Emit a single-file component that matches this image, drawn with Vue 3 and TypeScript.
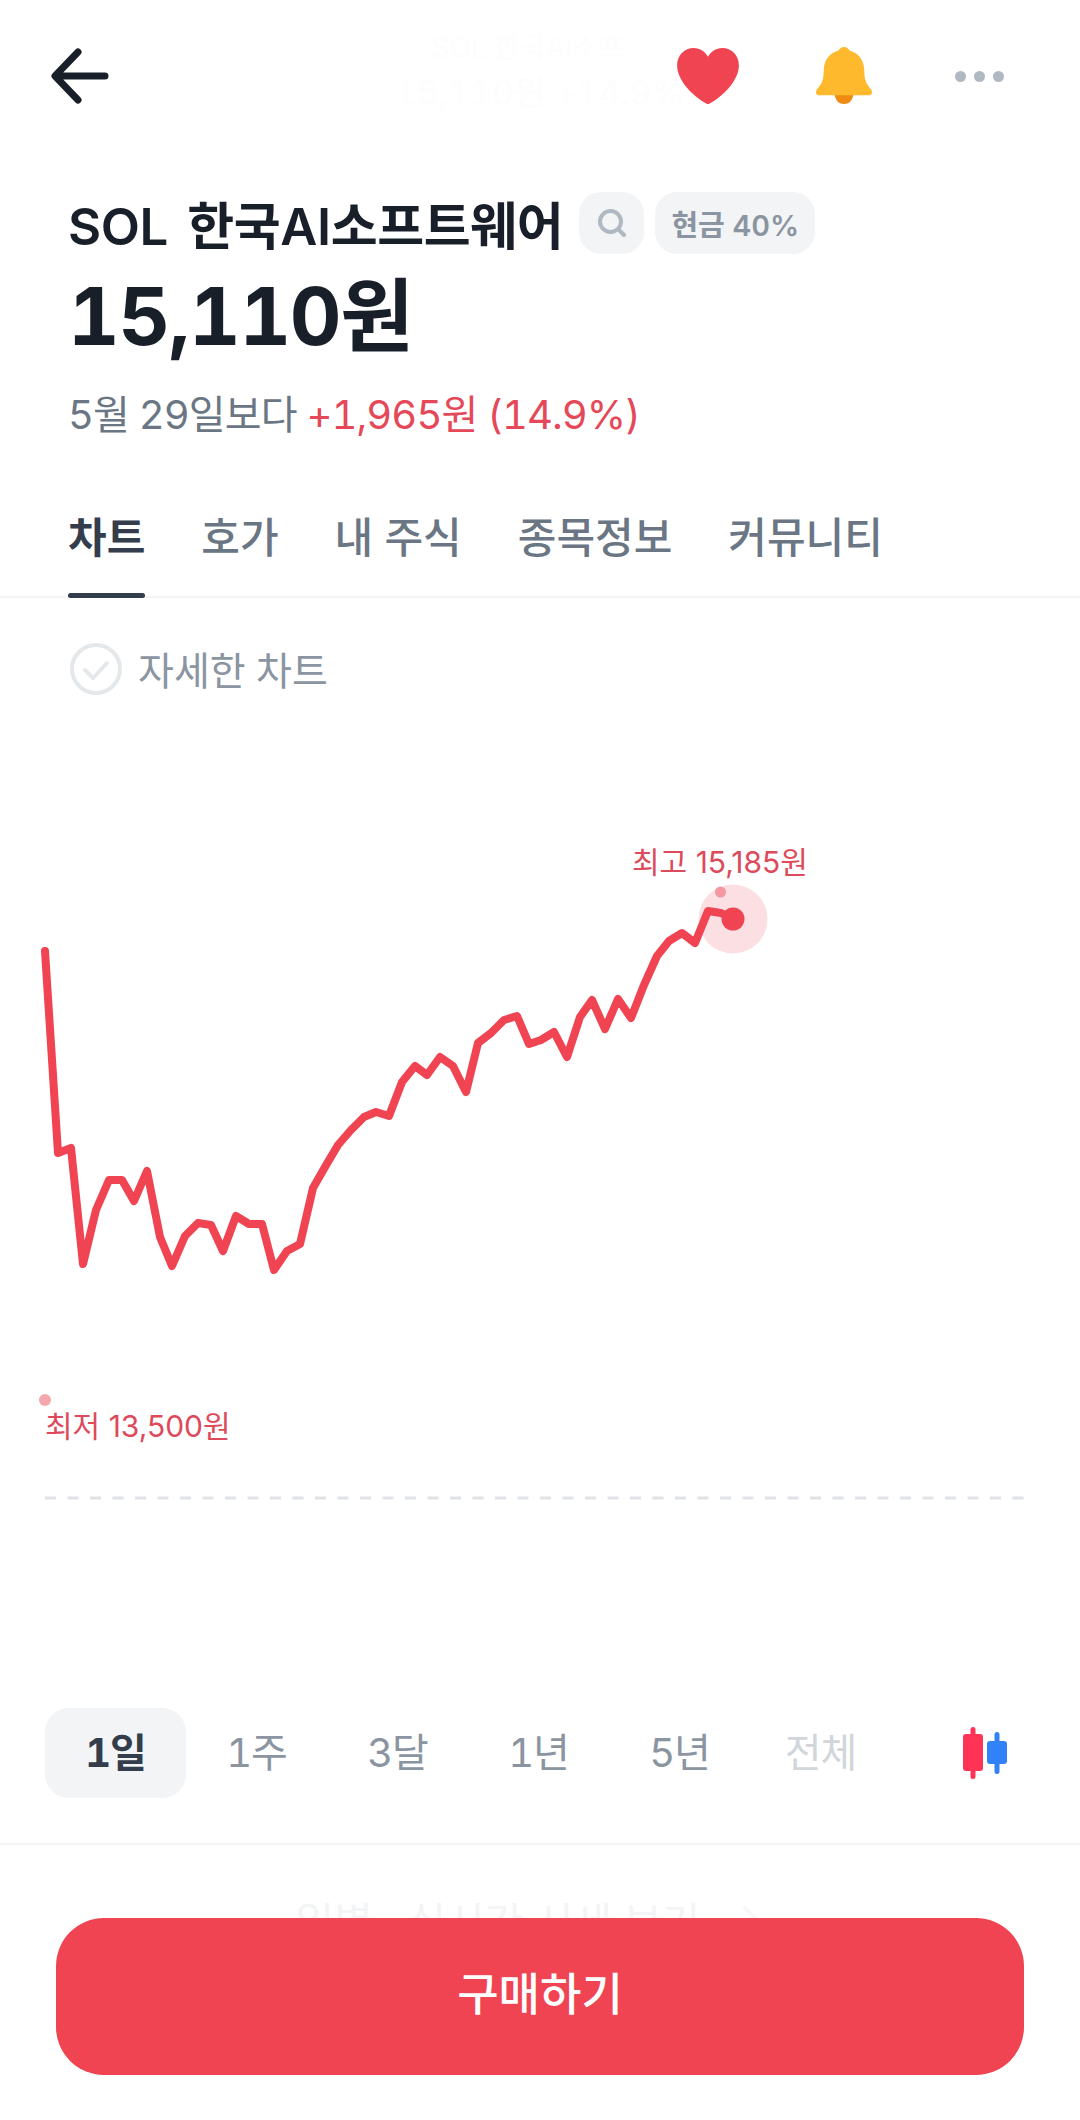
<script setup lang="ts">
const tabs = ['차트', '호가', '내 주식', '종목정보', '커뮤니티']
const periods = ['1일', '1주', '3달', '1년', '5년', '전체']

const line = [
  [45, 951], [58, 1153], [71, 1148], [83, 1264], [96, 1210], [109, 1180], [122, 1180], [134, 1201],
  [147, 1171], [160, 1237], [172, 1266], [185, 1236], [198, 1223], [211, 1225], [223, 1251], [236, 1216],
  [249, 1224], [262, 1224], [274, 1270], [287, 1251], [300, 1244], [313, 1188], [325, 1167], [338, 1145],
  [351, 1130], [364, 1117], [376, 1112], [389, 1116], [402, 1082], [415, 1066], [427, 1075], [440, 1057],
  [453, 1066], [466, 1092], [478, 1043], [491, 1033], [504, 1020], [517, 1016], [529, 1044], [541, 1040],
  [554, 1032], [567, 1057], [580, 1017], [592, 1000], [605, 1029], [618, 999], [631, 1018], [644, 985],
  [657, 956], [669, 941], [682, 933], [695, 943], [708, 911], [721, 913], [733, 919],
]
// svg starts at y=700 on the page
const points = line.map(([x, y]) => `${x},${y - 700}`).join(' ')
</script>

<template>
  <div class="page">
    <header class="top">
      <svg class="back" width="58" height="56" viewBox="0 0 58 56" fill="none" stroke="#191f28" stroke-width="7" stroke-linecap="round" stroke-linejoin="round">
        <path d="M27 4 4 28l23 24M5 28h49" />
      </svg>
      <div class="ghost-title">
        <div class="g1">SOL 한국AI소프…</div>
        <div class="g2">15,110원 +14.9%</div>
      </div>
      <div class="actions">
        <svg class="heart" width="64" height="56" viewBox="0 0 66 58"><path fill="#f04452" d="M33 58C30 58 1 39 1 18 1 7 9 0 18 0c7 0 12 4 15 9 3-5 8-9 15-9 9 0 17 7 17 18 0 21-29 40-32 40Z" /></svg>
        <svg width="58" height="58" viewBox="0 0 60 60">
          <path fill="#ee8b12" d="M20 46h20c0 8-4 13-10 13S20 54 20 46Z" />
          <path fill="#ffb92c" d="M30 0c3 0 5 2 6 4 9 2 15 10 15 21 0 6 1 11 4 15l3 4c2 3 1 6-3 6H5c-4 0-5-3-3-6l3-4c3-4 4-9 4-15C9 14 15 6 24 4c1-2 3-4 6-4Z" />
        </svg>
        <div class="dots"><i></i><i></i><i></i></div>
      </div>
    </header>

    <section class="info">
      <div class="name-row">
        <h1>SOL 한국AI소프트웨어</h1>
        <span class="chip icon">
          <svg width="30" height="30" viewBox="0 0 30 30" fill="none" stroke="#b0b8c1" stroke-width="4" stroke-linecap="round"><circle cx="13.5" cy="13.5" r="10.5" /><path d="m21 21 6 6" /></svg>
        </span>
        <span class="chip">현금 40%</span>
      </div>
      <div class="price">15,110원</div>
      <div class="change">5월 29일보다 <span class="up">+1,965원 (14.9%)</span></div>
    </section>

    <nav class="tabs">
      <div v-for="(t, i) in tabs" :key="t" class="tab" :class="{ on: i === 0 }">{{ t }}</div>
    </nav>

    <div class="detail">
      <svg width="52" height="52" viewBox="0 0 52 52" fill="none" stroke="#e5e8eb" stroke-linecap="round" stroke-linejoin="round">
        <circle cx="26" cy="26" r="24" stroke-width="4" />
        <path d="m15 27 8 8 14-15" stroke-width="4" />
      </svg>
      <span>자세한 차트</span>
    </div>

    <div class="chart">
      <svg width="1080" height="820" viewBox="0 0 1080 820">
        <circle cx="733" cy="219" r="34.5" fill="#fcdfe2" />
        <polyline :points="points" fill="none" stroke="#f04452" stroke-width="8" stroke-linejoin="round" stroke-linecap="round" />
        <circle cx="733" cy="219" r="11.5" fill="#f04452" />
        <circle cx="720.5" cy="192" r="5.5" fill="#f597a0" />
        <circle cx="45" cy="700" r="6" fill="#f5a7ae" />
        <line x1="45" y1="798" x2="1025" y2="798" stroke="#dfe3e8" stroke-width="3" stroke-dasharray="11 11.5" />
      </svg>
      <div class="label high">최고 15,185원</div>
      <div class="label low">최저 13,500원</div>
    </div>

    <div class="periods">
      <div v-for="(p, i) in periods" :key="p" class="period" :class="{ on: i === 0, off: i === 5 }">{{ p }}</div>
      <svg class="candle" width="44" height="52" viewBox="0 0 44 52">
        <rect x="7.5" y="0" width="5" height="52" rx="2.5" fill="#ff3355" />
        <rect x="0" y="7" width="20" height="37" rx="3" fill="#ff3355" />
        <rect x="31.5" y="5" width="5" height="42" rx="2.5" fill="#3182f6" />
        <rect x="24" y="14" width="20" height="23" rx="3" fill="#3182f6" />
      </svg>
    </div>

    <div class="more">
      <span>일별 · 실시간 시세 보기</span>
      <svg width="22" height="36" viewBox="0 0 22 36" fill="none" stroke="#f7f8f9" stroke-width="4" stroke-linecap="round" stroke-linejoin="round"><path d="m3 3 15 15L3 33" /></svg>
    </div>

    <button class="buy">구매하기</button>
  </div>
</template>

<style scoped>
.page {
  position: relative;
  width: 1080px;
  height: 2120px;
  overflow: hidden;
  background: #fff;
  font-family: Inter, "Noto Sans CJK KR", sans-serif;
  font-variant-numeric: tabular-nums;
  color: #191f28;
}
.top {
  position: relative;
  display: flex;
  align-items: center;
  justify-content: space-between;
  height: 56px;
  padding: 48px 76px 0 51px;
}
.ghost-title {
  position: absolute;
  left: 0;
  right: 0;
  top: 28px;
  text-align: center;
  color: #fdfdfd;
}
.g1 { font-size: 28px; line-height: 40px; }
.g2 { font-size: 34px; line-height: 50px; }
.actions {
  position: relative;
  display: flex;
  align-items: center;
}
.heart { margin-right: 75px; }
.dots {
  display: flex;
  gap: 8px;
  margin-left: 82px;
}
.dots i {
  width: 11px;
  height: 11px;
  border-radius: 50%;
  background: #b0b8c1;
}
.info { padding: 88px 68px 0; }
.name-row {
  display: flex;
  align-items: center;
  gap: 11px;
  height: 62px;
}
h1 {
  margin: 0 5px 0 0;
  font-size: 51px;
  font-weight: 600;
  letter-spacing: -0.4px;
  word-spacing: 6px;
  white-space: nowrap;
}
.chip {
  display: flex;
  align-items: center;
  justify-content: center;
  height: 62px;
  padding: 0 16px;
  border-radius: 22px;
  background: #f2f4f6;
  color: #8b95a1;
  font-size: 29px;
  font-weight: 600;
  white-space: nowrap;
}
.chip.icon { width: 65px; padding: 0; }
.price {
  margin-top: 17px;
  font-size: 80px;
  font-weight: 700;
  line-height: 90px;
  letter-spacing: -1.3px;
}
.change {
  margin-top: 28px;
  font-size: 40px;
  line-height: 52px;
  color: #6b7684;
  letter-spacing: -0.9px;
  white-space: pre-wrap;
}
.up { color: #e54858; }
.tabs {
  display: flex;
  gap: 56px;
  margin-top: 59px;
  height: 96px;
  padding: 0 68px;
  border-bottom: 2px solid #f2f4f6;
}
.tab {
  position: relative;
  font-size: 42px;
  line-height: 60px;
  padding-top: 8px;
  color: #6b7684;
  font-weight: 500;
  white-space: nowrap;
}
.tab.on {
  color: #333d4b;
  font-weight: 700;
}
.tab.on::after {
  content: "";
  position: absolute;
  left: 0;
  right: 0;
  bottom: -2px;
  height: 5px;
  border-radius: 3px;
  background: #333d4b;
}
.detail {
  display: flex;
  align-items: center;
  gap: 16px;
  margin-top: 45px;
  padding-left: 70px;
  height: 52px;
  font-size: 39px;
  color: #8b95a1;
}
.detail span { margin-bottom: 3px; }
.chart {
  position: relative;
  height: 820px;
  margin-top: 5px;
}
.chart svg { display: block; }
.label {
  position: absolute;
  font-size: 30px;
  line-height: 36px;
  font-variant-numeric: normal;
  color: #dc4a5c;
  white-space: nowrap;
}
.high { left: 632px; top: 144px; }
.low { left: 45px; top: 708px; }
.periods {
  display: flex;
  align-items: center;
  height: 90px;
  margin-top: 188px;
  padding-left: 45px;
}
.period {
  width: 141px;
  height: 90px;
  line-height: 90px;
  text-align: center;
  font-size: 40px;
  letter-spacing: -1px;
  color: #8b95a1;
  border-radius: 24px;
  white-space: nowrap;
}
.period.on {
  background: #f2f4f6;
  color: #333d4b;
  font-weight: 700;
}
.period.off { color: #d1d6db; }
.candle { margin-left: 72px; }
.more {
  display: flex;
  justify-content: center;
  align-items: center;
  gap: 42px;
  margin-top: 45px;
  padding: 52px 20px 0 0;
  border-top: 2px solid #f2f4f6;
  font-size: 42px;
  line-height: 52px;
  color: #f2f4f6;
}
.buy {
  position: absolute;
  left: 56px;
  top: 1918px;
  width: 968px;
  height: 157px;
  padding: 0 0 10px;
  border: 0;
  border-radius: 48px;
  background: #f04452;
  color: #fff;
  font-family: inherit;
  font-size: 45px;
  font-weight: 500;
}
</style>
